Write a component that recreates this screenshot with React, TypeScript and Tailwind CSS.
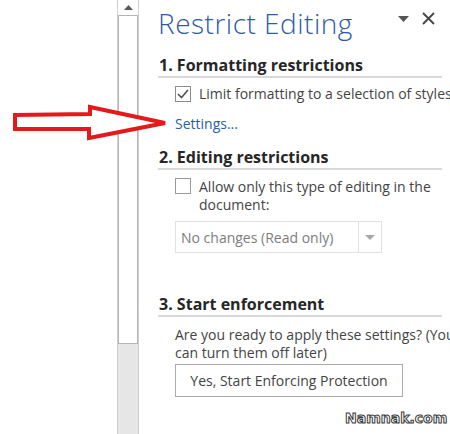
import React from "react";

const font = { fontFamily: '"Open Sans", "Noto Sans", sans-serif' };

function Heading({ children }: { children: React.ReactNode }) {
  return (
    <div>
      <div className="h-[20px] pl-[1px] text-[16px] leading-[20px] font-bold text-[#262626] whitespace-nowrap">
        {children}
      </div>
      <div className="mt-[1px] mr-[8px] h-[2px] bg-[#d9d9d9]" />
    </div>
  );
}

export default function App() {
  return (
    <div
      className="relative w-[450px] h-[434px] overflow-hidden bg-white flex"
      style={font}
    >
      {/* document area */}
      <div className="w-[117px] shrink-0 bg-white" />

      {/* scrollbar */}
      <div className="w-[22px] shrink-0 flex flex-col bg-[#e9e9e9] border-l border-r border-[#cfcfcf]">
        <div className="h-[15px] bg-white flex items-center justify-center">
          <svg width="9" height="5" viewBox="0 0 9 5">
            <polygon points="0,5 4.5,0 9,5" fill="#5a5a5a" />
          </svg>
        </div>
        <div className="h-[329px] bg-white border border-[#b5b5b5]" />
        <div className="flex-1 mx-[2px] bg-[#e6e6e6]" />
      </div>

      {/* pane */}
      <div className="flex-1 min-w-0 flex flex-col pl-[19px] bg-white overflow-hidden">
        {/* header */}
        <div className="h-[55px] flex items-start justify-between">
          <div className="pt-[7px] text-[28px] leading-[32px] font-light tracking-[0.5px] text-[#2f5aa8] whitespace-nowrap">
            Restrict Editing
          </div>
          <div className="flex items-center gap-[13px] pt-[12px] pr-[15px]">
            <svg width="11" height="6" viewBox="0 0 11 6">
              <polygon points="0,0 11,0 5.5,6" fill="#555" />
            </svg>
            <svg width="13" height="13" viewBox="0 0 13 13">
              <path d="M1 1 L12 12 M12 1 L1 12" stroke="#444" strokeWidth="1.8" />
            </svg>
          </div>
        </div>

        {/* 1. formatting */}
        <Heading>1. Formatting restrictions</Heading>
        <div className="mt-[6px] pl-[17px] h-[20px] flex items-center gap-[8px]">
          <div className="w-[16px] h-[16px] shrink-0 border border-[#8c8c8c] bg-white flex items-center justify-center">
            <svg width="12" height="10" viewBox="0 0 12 10">
              <path d="M1 5 L4.5 8.5 L11 1" fill="none" stroke="#505050" strokeWidth="1.6" />
            </svg>
          </div>
          <span className="text-[14px] leading-[20px] text-[#444] whitespace-nowrap">
            Limit formatting to a selection of styles
          </span>
        </div>
        <div className="mt-[10px] pl-[17px] h-[20px] text-[14px] leading-[20px] text-[#2b5ca8]">
          Settings...
        </div>

        {/* 2. editing */}
        <div className="mt-[13px]">
          <Heading>2. Editing restrictions</Heading>
        </div>
        <div className="mt-[8px] pl-[17px] flex items-start gap-[8px]">
          <div className="w-[16px] h-[16px] shrink-0 border border-[#9a9a9a] bg-white" />
          <div className="text-[14px] leading-[18px] text-[#444] whitespace-nowrap">
            <div>Allow only this type of editing in the</div>
            <div>document:</div>
          </div>
        </div>
        <div className="mt-[7px] ml-[17px] w-[207px] h-[32px] flex border border-[#e1e1e1] bg-white">
          <div className="flex-1 flex items-center pl-[5px] text-[14px] text-[#7c7c7c] whitespace-nowrap">
            No changes (Read only)
          </div>
          <div className="w-[23px] border-l border-[#e1e1e1] flex items-center justify-center">
            <svg width="10" height="5" viewBox="0 0 10 5">
              <polygon points="0,0 10,0 5,5" fill="#a8a8a8" />
            </svg>
          </div>
        </div>

        {/* 3. enforcement */}
        <div className="mt-[41px]">
          <Heading>3. Start enforcement</Heading>
        </div>
        <div className="mt-[9px] pl-[17px] text-[14px] leading-[18px] text-[#444] whitespace-nowrap">
          <div>Are you ready to apply these settings? (You</div>
          <div>can turn them off later)</div>
        </div>
        <div className="mt-[2px] ml-[17px] w-[228px] h-[33px] border border-[#ababab] bg-white flex items-center justify-center text-[14px] text-[#444] whitespace-nowrap">
          Yes, Start Enforcing Protection
        </div>
      </div>

      {/* red arrow annotation */}
      <svg
        className="absolute left-0 top-0"
        width="180"
        height="150"
        viewBox="0 0 180 150"
      >
        <polygon
          points="15,115 90,114 90,107 165,123 89,138 89,129 15,129"
          fill="white"
          stroke="#e3191c"
          strokeWidth="4"
          strokeLinejoin="miter"
        />
      </svg>

      {/* watermark */}
      <div
        className="absolute left-[345px] top-[409px] text-[14px] leading-[18px] font-bold text-white [-webkit-text-stroke:1px_#3a3a3a]"
        style={{ fontFamily: '"DejaVu Sans", sans-serif' }}
      >
        Namnak.com
      </div>
    </div>
  );
}
